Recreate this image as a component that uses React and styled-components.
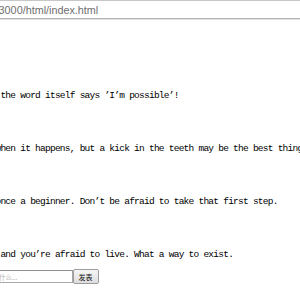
import React from 'react';
import styled, { createGlobalStyle } from 'styled-components';

const GlobalStyle = createGlobalStyle`
	html, body {
		margin: 0;
		padding: 0;
		background: #fff;
		overflow: hidden;
	}
`;

const Frame = styled.div`
	width: 300px;
	height: 300px;
	overflow: hidden;
	display: flex;
	flex-direction: column;
`;

const AddressBar = styled.div`
	height: 17px;
	border-top: 1px solid #c8c8c8;
	border-bottom: 1px solid #b4b4b4;
	box-shadow: 0 1px 0 #e2e2e2;
	display: flex;
	align-items: center;
	overflow: hidden;
	white-space: nowrap;
`;

const Url = styled.span`
	margin-left: -47px;
	font-family: 'Liberation Sans', Arial, sans-serif;
	font-size: 10.8px;
	color: #6e6e6e;
`;

const Page = styled.div`
	margin-left: -108.5px;
	padding-top: 71px;
	display: flex;
	flex-direction: column;
	white-space: nowrap;
`;

const Line = styled.p`
	margin: 0 0 41px;
	height: 12px;
	line-height: 12px;
	font-family: 'Liberation Mono', 'Courier New', monospace;
	font-size: 9.5px;
	letter-spacing: -0.75px;
	color: #000;

	&:last-of-type {
		margin-bottom: 8px;
	}
`;

const Form = styled.form`
	display: flex;
	align-items: center;
	margin: 0;
`;

const Input = styled.input`
	box-sizing: border-box;
	width: 181px;
	height: 13px;
	margin: 0;
	padding: 0 0 0 9px;
	border: 1px solid #a8a8a8;
	border-top-color: #8e8e8e;
	font-family: 'Noto Sans CJK SC', sans-serif;
	font-size: 6.5px;
	outline: none;

	&::placeholder {
		color: #b0b0b0;
	}
`;

const Button = styled.button`
	box-sizing: border-box;
	width: 26px;
	height: 15px;
	margin: 0;
	padding: 0;
	border: 1px solid #9c9c9c;
	border-radius: 2px;
	background: linear-gradient(#f6f6f6, #dedede);
	font-family: 'Noto Sans CJK SC', sans-serif;
	font-size: 7px;
	color: #111;
`;

const App = () => (
	<Frame>
		<GlobalStyle />
		<AddressBar>
			<Url>localhost:3000/html/index.html</Url>
		</AddressBar>
		<Page>
			<Line>Nothing's impossible, the word itself says ’I’m possible’!</Line>
			<Line>You may not sense it when it happens, but a kick in the teeth may be the best thing in the world for you.</Line>
			<Line>Every single pro was once a beginner. Don’t be afraid to take that first step.</Line>
			<Line>You’re afraid to die, and you’re afraid to live. What a way to exist.</Line>
			<Form onSubmit={e => e.preventDefault()}>
				<Input type="text" placeholder="请在这里写下你的评论，随便说点什么..." />
				<Button type="submit">发表</Button>
			</Form>
		</Page>
	</Frame>
);

export default App;
